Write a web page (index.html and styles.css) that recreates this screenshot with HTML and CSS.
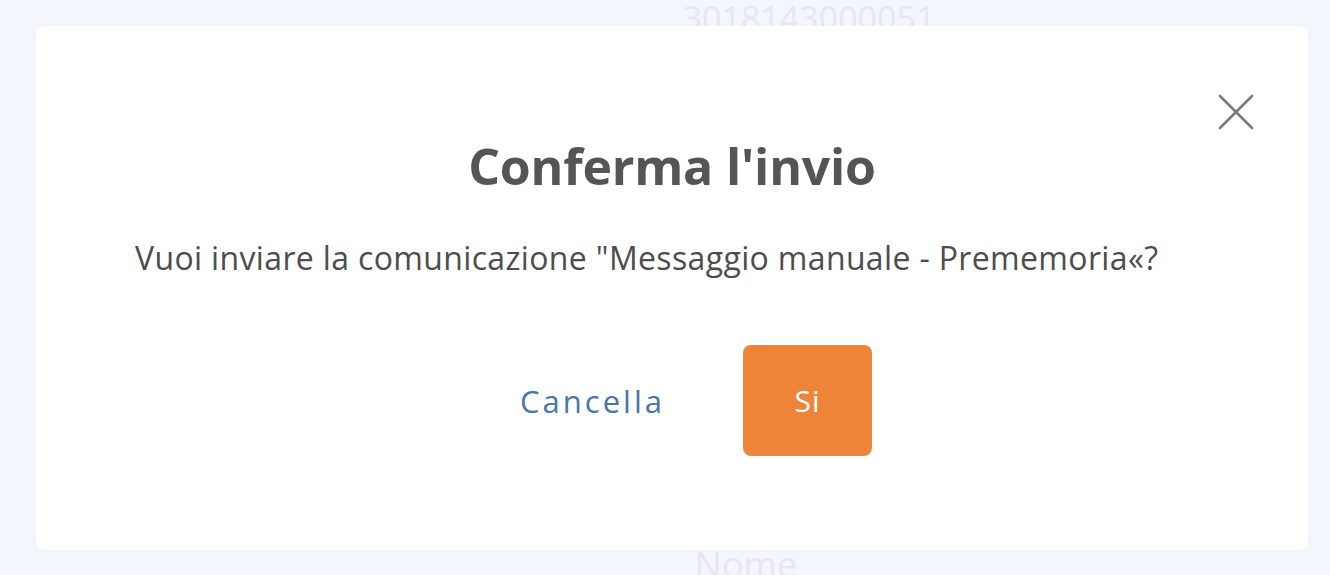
FILE: index.html
```html
<!DOCTYPE html>
<html lang="it">
<head>
<meta charset="utf-8">
<title>Conferma l'invio</title>
<link rel="stylesheet" href="styles.css">
</head>
<body>
<div class="page">
  <div class="bg-num">3018143000051</div>
  <div class="bg-spacer"></div>
  <div class="bg-name">Nome</div>
</div>
<div class="overlay">
  <div class="modal">
    <button class="close" aria-label="Chiudi">
      <svg width="36" height="36" viewBox="0 0 36 36"><path d="M2 2 L34 34 M34 2 L2 34" stroke="#7a7a7a" stroke-width="2.6" stroke-linecap="round" fill="none"/></svg>
    </button>
    <h1 class="title">Conferma l'invio</h1>
    <p class="text">Vuoi inviare la comunicazione "Messaggio manuale - Prememoria«?</p>
    <div class="actions">
      <button class="btn-cancel">Cancella</button>
      <button class="btn-ok">Si</button>
    </div>
  </div>
</div>
</body>
</html>
```
FILE: styles.css
```css
* { box-sizing: border-box; }
html, body { margin: 0; padding: 0; }
body {
  width: 1330px;
  height: 575px;
  overflow: hidden;
  background: #f3f6fd;
  font-family: "Open Sans", "Lato", sans-serif;
  position: relative;
}
.page {
  height: 575px;
  display: flex;
  flex-direction: column;
  align-items: center;
}
.bg-num {
  font-size: 34px;
  color: #e6e8ee;
  line-height: 40px;
  margin-top: -2px;
  padding-left: 288px;
}
.bg-spacer { flex: 1; }
.bg-name {
  font-size: 36px;
  color: #e6e8ee;
  line-height: 40px;
  margin-bottom: -10px;
  padding-left: 162px;
}
.overlay {
  position: absolute;
  inset: 0;
  padding: 26px 22px 25px 36px;
  display: flex;
}
.modal {
  position: relative;
  flex: 1;
  background: #fff;
  border-radius: 10px;
  padding: 108px 0 0 0;
}
.close {
  position: absolute;
  top: 67px;
  right: 53px;
  width: 38px;
  height: 38px;
  padding: 1px;
  border: 0;
  background: none;
  display: flex;
  align-items: center;
  justify-content: center;
}
.title {
  margin: 0;
  text-align: center;
  font-size: 50px;
  font-weight: 700;
  color: #555555;
  line-height: 64px;
  letter-spacing: -0.2px;
}
.text {
  margin: 38px 0 0 0;
  padding-left: 99px;
  font-size: 32px;
  color: #4d4d4d;
  line-height: 44px;
  letter-spacing: 0.35px;
}
.actions {
  margin-top: 65px;
  padding-left: 465px;
  display: flex;
  align-items: center;
}
.btn-cancel {
  width: 183px;
  height: 111px;
  border: 0;
  background: none;
  font-family: inherit;
  font-size: 31px;
  color: #4a76a8;
  letter-spacing: 3px;
}
.btn-ok {
  margin-left: 59px;
  width: 129px;
  height: 111px;
  border: 0;
  border-radius: 8px;
  background: #ee8438;
  font-family: inherit;
  font-size: 30px;
  color: #ffffff;
  letter-spacing: 1px;
}
```
